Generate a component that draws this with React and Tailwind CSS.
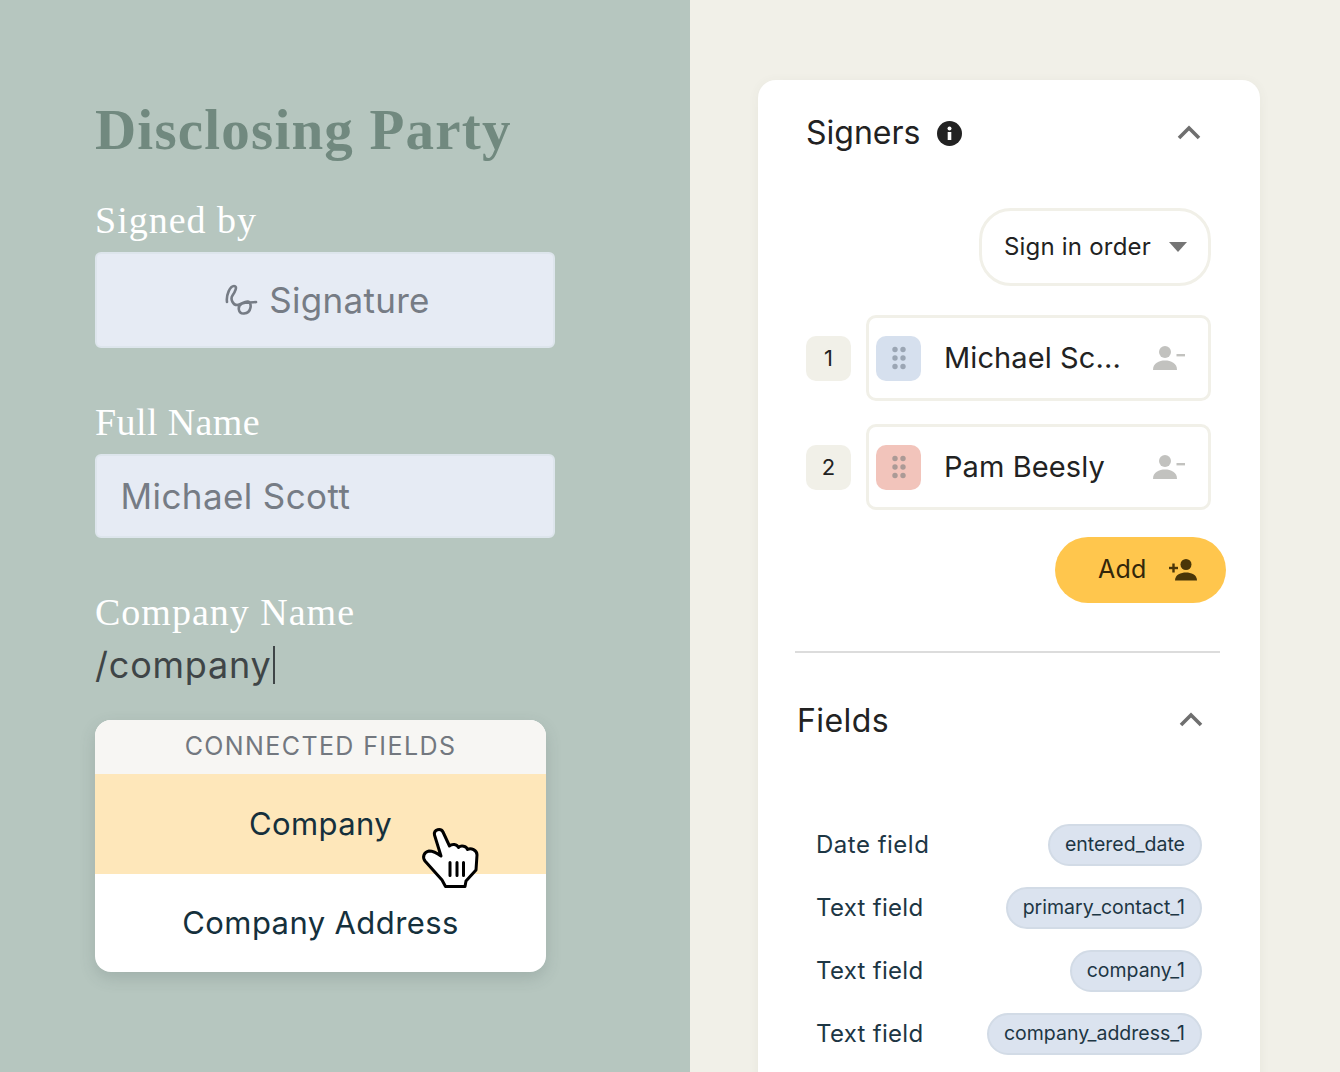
import React from "react";

const signers = [
  { num: 1, name: "Michael Sc...", tile: "bg-[#d6e0ee]", dots: "#9ba6b4" },
  { num: 2, name: "Pam Beesly", tile: "bg-[#f2c4bb]", dots: "#ab9a96" },
];

const fields = [
  { label: "Date field", tag: "entered_date", track: "tracking-[0.5px]" },
  { label: "Text field", tag: "primary_contact_1", track: "tracking-[0.3px]" },
  { label: "Text field", tag: "company_1", track: "tracking-[0.3px]" },
  { label: "Text field", tag: "company_address_1", track: "tracking-[0.3px]" },
];

const Chevron = () => (
  <svg className="block" width="24" height="16" viewBox="0 0 24 16" fill="none" stroke="#6f6f6f" strokeWidth="3.6">
    <path d="M2 14 L12 4 L22 14" />
  </svg>
);

const DragDots = ({ color }) => (
  <svg width="14" height="24" viewBox="0 0 14 24" fill={color}>
    {[3.5, 12, 20.5].map((y) => (
      <g key={y}>
        <circle cx="3" cy={y} r="2.7" />
        <circle cx="11" cy={y} r="2.7" />
      </g>
    ))}
  </svg>
);

const PersonMinus = () => (
  <svg width="32" height="26" viewBox="0 0 32 26" fill="#c2c2bf">
    <circle cx="12" cy="7" r="6" />
    <path d="M0 25 C0 18 6 15.5 12 15.5 C18 15.5 24 18 24 25 Z" />
    <rect x="23.5" y="9" width="8.5" height="2.4" />
  </svg>
);

const PersonPlus = () => (
  <svg width="28" height="24" viewBox="0 0 28 24" fill="#4a3608">
    <circle cx="17" cy="6.5" r="5.5" />
    <path d="M6 22.5 C6 16.5 12 14.5 17 14.5 C22 14.5 28 16.5 28 22.5 Z" />
    <rect x="0" y="8.8" width="9" height="2.4" />
    <rect x="3.3" y="5.5" width="2.4" height="9" />
  </svg>
);

const Squiggle = () => (
  <svg width="34" height="32" viewBox="224 284 34 32" fill="none" stroke="#767c85" strokeWidth="2.6" strokeLinecap="round">
    <path d="M226 302 C225 295 229 286 233 286 C237 286 234 292 231.5 295.5 C229 299 232 305 236 305 C240 305 243 301 247 301.5 C251 302 251 313 243 313.5 C237 314 236 306 241 303.5 C245 302 251 303 255 302" />
  </svg>
);

const HandCursor = () => (
  <svg
    className="absolute left-[325px] top-[105px]"
    width="60"
    height="64"
    viewBox="420 825 60 64"
    fill="#fff"
    stroke="#000"
    strokeWidth="3"
    strokeLinejoin="round"
    strokeLinecap="round"
  >
    <path d="M434.5 835 C433.5 829 441 828 443 832 L449.5 846 C452 843.5 457 844 458.5 847.5 C461 845 466.5 846 467.5 849.5 C471 847.5 477 850 477 855 L476 870 L466 881 L465 886.5 L445.5 886.5 L442 880 L425 861 C422 857 424 852 429 851 C433 851 437 853 441 856 Z" />
    <path d="M450 862.5 V875.5 M457 862.5 V875.5 M463.5 862.5 V875.5" fill="none" />
  </svg>
);

export default function App() {
  return (
    <div className="flex h-[1072px] w-[1340px] overflow-hidden bg-[#f1f0e8] font-['Inter',sans-serif]">
      {/* Form side */}
      <div className="h-full w-[690px] shrink-0 bg-[#b6c6bf] pl-[95px] pt-[96px]">
        <h1 className="h-[68px] font-['Liberation_Serif',serif] text-[57px] leading-[68px] font-bold tracking-[1.2px] text-[#71897f]">
          Disclosing Party
        </h1>
        <div className="mt-[38px] h-[36px] font-['Liberation_Serif',serif] text-[38px] leading-[36px] tracking-[1px] text-white">Signed by</div>
        <div className="mt-[14px] flex h-[96px] w-[460px] items-center justify-center gap-[10px] rounded-[6px] border-2 border-[#dde5ec] bg-[#e6ebf4] pl-[5px] text-[35px] tracking-[0.3px] text-[#767c85]">
          <Squiggle />
          <span>Signature</span>
        </div>
        <div className="mt-[56px] h-[36px] font-['Liberation_Serif',serif] text-[38px] leading-[36px] tracking-[0.4px] text-white">Full Name</div>
        <div className="mt-[14px] flex h-[84px] w-[460px] items-center rounded-[6px] border-2 border-[#dde5ec] bg-[#e6ebf4] pl-[23.5px] text-[35px] tracking-[0.4px] text-[#767c85]">
          Michael Scott
        </div>
        <div className="mt-[56px] h-[36px] font-['Liberation_Serif',serif] text-[38px] leading-[36px] tracking-[1px] text-white">Company Name</div>
        <div className="mt-[13px] flex h-[44px] items-center text-[36px] tracking-[0.8px] text-[#3f4547]">
          /company<span className="ml-[1px] h-[38px] w-[2px] bg-[#3f4547]" />
        </div>
        <div className="relative mt-[33px] w-[451px] overflow-visible rounded-[16px] bg-white shadow-[0_6px_16px_rgba(60,80,75,0.18)]">
          <div className="flex h-[54px] items-center justify-center rounded-t-[16px] bg-[#f7f6f3] text-[25px] tracking-[1.4px] text-[#73787f]">
            CONNECTED FIELDS
          </div>
          <div className="flex h-[100px] items-center justify-center bg-[#fee7ba] text-[31px] tracking-[0.4px] text-[#15303c]">Company</div>
          <div className="flex h-[98px] items-center justify-center rounded-b-[16px] text-[31px] tracking-[0.4px] text-[#15303c]">Company Address</div>
          <HandCursor />
        </div>
      </div>

      {/* Signers card */}
      <div className="ml-[68px] mt-[80px] h-[1100px] w-[502px] shrink-0 rounded-[18px] bg-white shadow-[0_2px_12px_rgba(80,80,60,0.06)]">
        <div className="flex h-[106px] items-center pl-[48px] pr-[59px]">
          <span className="text-[32px] text-[#222]">Signers</span>
          <svg className="ml-[17px]" width="25" height="25" viewBox="0 0 25 25">
            <circle cx="12.5" cy="12.5" r="12.5" fill="#222" />
            <circle cx="12.5" cy="7.5" r="2" fill="#fff" />
            <rect x="10.7" y="11" width="3.6" height="8" fill="#fff" />
          </svg>
          <span className="mb-[3px] ml-auto"><Chevron /></span>
        </div>
        <div className="mr-[49px] mt-[22px] flex justify-end">
          <div className="flex h-[78px] w-[232px] items-center rounded-[32px] border-[3px] border-[#f1f0e8] pl-[22px] text-[24px] tracking-[0.2px] text-[#222]">
            Sign in order
            <span className="ml-[18px] h-0 w-0 border-x-[9px] border-t-[10px] border-x-transparent border-t-[#757575]" />
          </div>
        </div>
        <div className="mt-[29px] flex flex-col gap-[23px] pl-[48px] pr-[49px]">
          {signers.map((s) => (
            <div key={s.num} className="flex items-center gap-[15px]">
              <div className="flex h-[45px] w-[45px] items-center justify-center rounded-[10px] bg-[#f1f0e8] text-[22px] text-[#222]">
                {s.num}
              </div>
              <div className="flex h-[86px] flex-1 items-center rounded-[10px] border-[3px] border-[#f1f0e8] pl-[7px] pr-[23px]">
                <div className={`flex h-[45px] w-[45px] items-center justify-center rounded-[10px] ${s.tile}`}>
                  <DragDots color={s.dots} />
                </div>
                <span className="ml-[23px] text-[29px] tracking-[0.1px] text-[#222]">{s.name}</span>
                <span className="ml-auto"><PersonMinus /></span>
              </div>
            </div>
          ))}
        </div>
        <div className="mr-[34px] mt-[27px] flex justify-end">
          <div className="flex h-[66px] w-[171px] items-center gap-[23px] rounded-full bg-[#ffc64d] pl-[43px] text-[25px] tracking-[0.2px] text-[#33260a]">
            Add
            <PersonPlus />
          </div>
        </div>
        <div className="ml-[37px] mr-[40px] mt-[48px] h-[2px] bg-[#dcdcdc]" />
        <div className="mt-[44px] flex h-[48px] items-center pl-[39px] pr-[57px]">
          <span className="text-[32px] tracking-[0.4px] text-[#222]">Fields</span>
          <span className="mb-[5px] ml-auto"><Chevron /></span>
        </div>
        <div className="mt-[79px] flex flex-col gap-[21px] pl-[58px] pr-[58px]">
          {fields.map((f, i) => (
            <div key={i} className={`flex h-[42px] items-center justify-between ${f.track}`}>
              <span className="text-[24px] text-[#1d3644]">{f.label}</span>
              <span className="flex h-[42px] items-center rounded-full border-2 border-[#d2dbe6] bg-[#dbe3ef] px-[15px] text-[19.5px] tracking-normal text-[#1d3644]">
                {f.tag}
              </span>
            </div>
          ))}
        </div>
      </div>
    </div>
  );
}
